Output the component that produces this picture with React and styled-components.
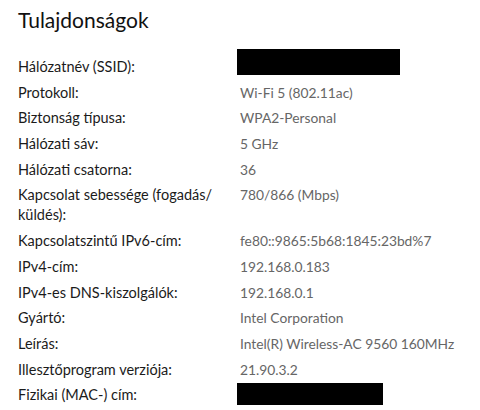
import styled, { createGlobalStyle } from "styled-components";

const GlobalStyle = createGlobalStyle`
  html, body {
    margin: 0;
    padding: 0;
    background: #ffffff;
  }
  body {
    font-family: Lato, "Noto Sans", sans-serif;
  }
`;

const Page = styled.div`
  width: 480px;
  height: 410px;
  overflow: hidden;
  padding: 0 0 0 18px;
  box-sizing: border-box;
`;

const Title = styled.h1`
  margin: 0;
  padding-top: 6px;
  font-size: 21px;
  font-weight: 400;
  line-height: 28px;
  color: #111111;
`;

const Grid = styled.dl`
  margin: 23px 0 0;
  display: grid;
  grid-template-columns: 210px 1fr;
  column-gap: 12px;
  row-gap: 5.7px;
  font-size: 14.5px;
  line-height: 20px;
`;

const Label = styled.dt`
  color: #1b1b1b;
`;

const Value = styled.dd`
  margin: 0;
  color: #666666;
  font-size: 13.8px;
  white-space: nowrap;
`;

const Redacted = styled.div`
  background: #000000;
  width: ${(p) => p.$w}px;
  height: ${(p) => p.$h}px;
  margin: ${(p) => p.$top}px 0 0 -3px;
`;

const rows = [
  ["Hálózatnév (SSID):", { w: 163, h: 26, top: -8 }],
  ["Protokoll:", "Wi-Fi 5 (802.11ac)"],
  ["Biztonság típusa:", "WPA2-Personal"],
  ["Hálózati sáv:", "5 GHz"],
  ["Hálózati csatorna:", "36"],
  ["Kapcsolat sebessége (fogadás/ küldés):", "780/866 (Mbps)"],
  ["Kapcsolatszintű IPv6-cím:", "fe80::9865:5b68:1845:23bd%7"],
  ["IPv4-cím:", "192.168.0.183"],
  ["IPv4-es DNS-kiszolgálók:", "192.168.0.1"],
  ["Gyártó:", "Intel Corporation"],
  ["Leírás:", "Intel(R) Wireless-AC 9560 160MHz"],
  ["Illesztőprogram verziója:", "21.90.3.2"],
  ["Fizikai (MAC-) cím:", { w: 146, h: 22, top: -2 }],
];

export default function App() {
  return (
    <Page>
      <GlobalStyle />
      <Title>Tulajdonságok</Title>
      <Grid>
        {rows.map(([label, value]) => (
          <>
            <Label key={label}>{label}</Label>
            <Value key={label + "v"}>
              {typeof value === "string" ? (
                value
              ) : (
                <Redacted $w={value.w} $h={value.h} $top={value.top} />
              )}
            </Value>
          </>
        ))}
      </Grid>
    </Page>
  );
}
